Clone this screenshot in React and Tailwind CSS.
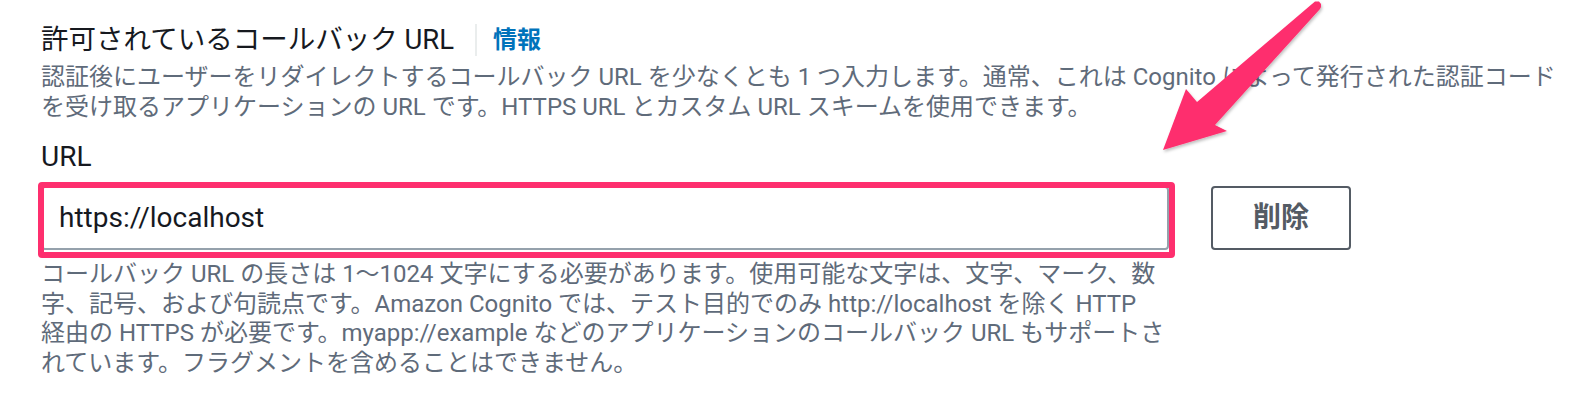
import React from "react";

// Callback URL form field (Cognito console, Japanese) with a pink annotation
export default function App() {
    return (
        <div className="relative w-[1592px] h-[406px] overflow-hidden bg-white pl-[41px] pt-[22px] font-['Roboto','Noto_Sans_CJK_JP',sans-serif]">
            {/* Header row */}
            <div className="flex items-center">
                <h2 className="text-[27.5px] leading-[36px] font-normal text-[#16191f]">許可されているコールバック URL</h2>
                <span className="ml-[21px] mr-[16px] h-[32px] w-[2px] bg-[#eaeded]"></span>
                <a className="text-[24px] leading-[36px] font-bold text-[#0073bb]">情報</a>
            </div>

            <p className="mt-[4px] text-[24px] leading-[30px] text-[#5f6b7a]">
                <span className="block whitespace-nowrap">認証後にユーザーをリダイレクトするコールバック URL を少なくとも 1 つ入力します。通常、これは Cognito によって発行された認証コード</span>
                <span className="block whitespace-nowrap">を受け取るアプリケーションの URL です。HTTPS URL とカスタム URL スキームを使用できます。</span>
            </p>

            <label className="mt-[17px] block text-[28px] leading-[36px] text-[#16191f]">URL</label>

            {/* Input + remove button */}
            <div className="mt-[11px] flex items-start gap-[42px]">
                <div className="relative w-[1128px]">
                    <div className="flex h-[64px] items-center rounded-[4px] border-2 border-[#95a1ac] bg-white pl-[16px] text-[28px] text-[#16191f]">
                        https://localhost
                    </div>
                    {/* annotation box */}
                    <div className="pointer-events-none absolute -left-[3px] -top-[4px] h-[76px] w-[1137px] rounded-[4px] border-[6px] border-[#fe2f6e]"></div>
                </div>
                <button className="flex h-[64px] w-[140px] items-center justify-center rounded-[4px] border-2 border-[#545b64] bg-white text-[28px] font-bold text-[#545b64]">
                    削除
                </button>
            </div>

            <p className="mt-[10px] text-[24px] leading-[29.5px] text-[#5f6b7a]">
                <span className="block whitespace-nowrap">コールバック URL の長さは 1〜1024 文字にする必要があります。使用可能な文字は、文字、マーク、数</span>
                <span className="block whitespace-nowrap">字、記号、および句読点です。Amazon Cognito では、テスト目的でのみ http://localhost を除く HTTP</span>
                <span className="block whitespace-nowrap">経由の HTTPS が必要です。myapp://example などのアプリケーションのコールバック URL もサポートさ</span>
                <span className="block whitespace-nowrap">れています。フラグメントを含めることはできません。</span>
            </p>

            {/* annotation arrow */}
            <svg className="pointer-events-none absolute left-[1150px] top-0" width="180" height="160" viewBox="0 0 180 160">
                <defs>
                    <filter id="sh" x="-20%" y="-20%" width="140%" height="140%">
                        <feDropShadow dx="1" dy="2" stdDeviation="1.5" floodColor="#000" floodOpacity="0.25" />
                    </filter>
                </defs>
                <polygon
                    filter="url(#sh)"
                    fill="#fe2f6e"
                    points="13,150 36,89 47,102 162,4 165,1.5 169,1.5 171,4 171,7 170,9 65,125 77,131"
                />
            </svg>
        </div>
    );
}
